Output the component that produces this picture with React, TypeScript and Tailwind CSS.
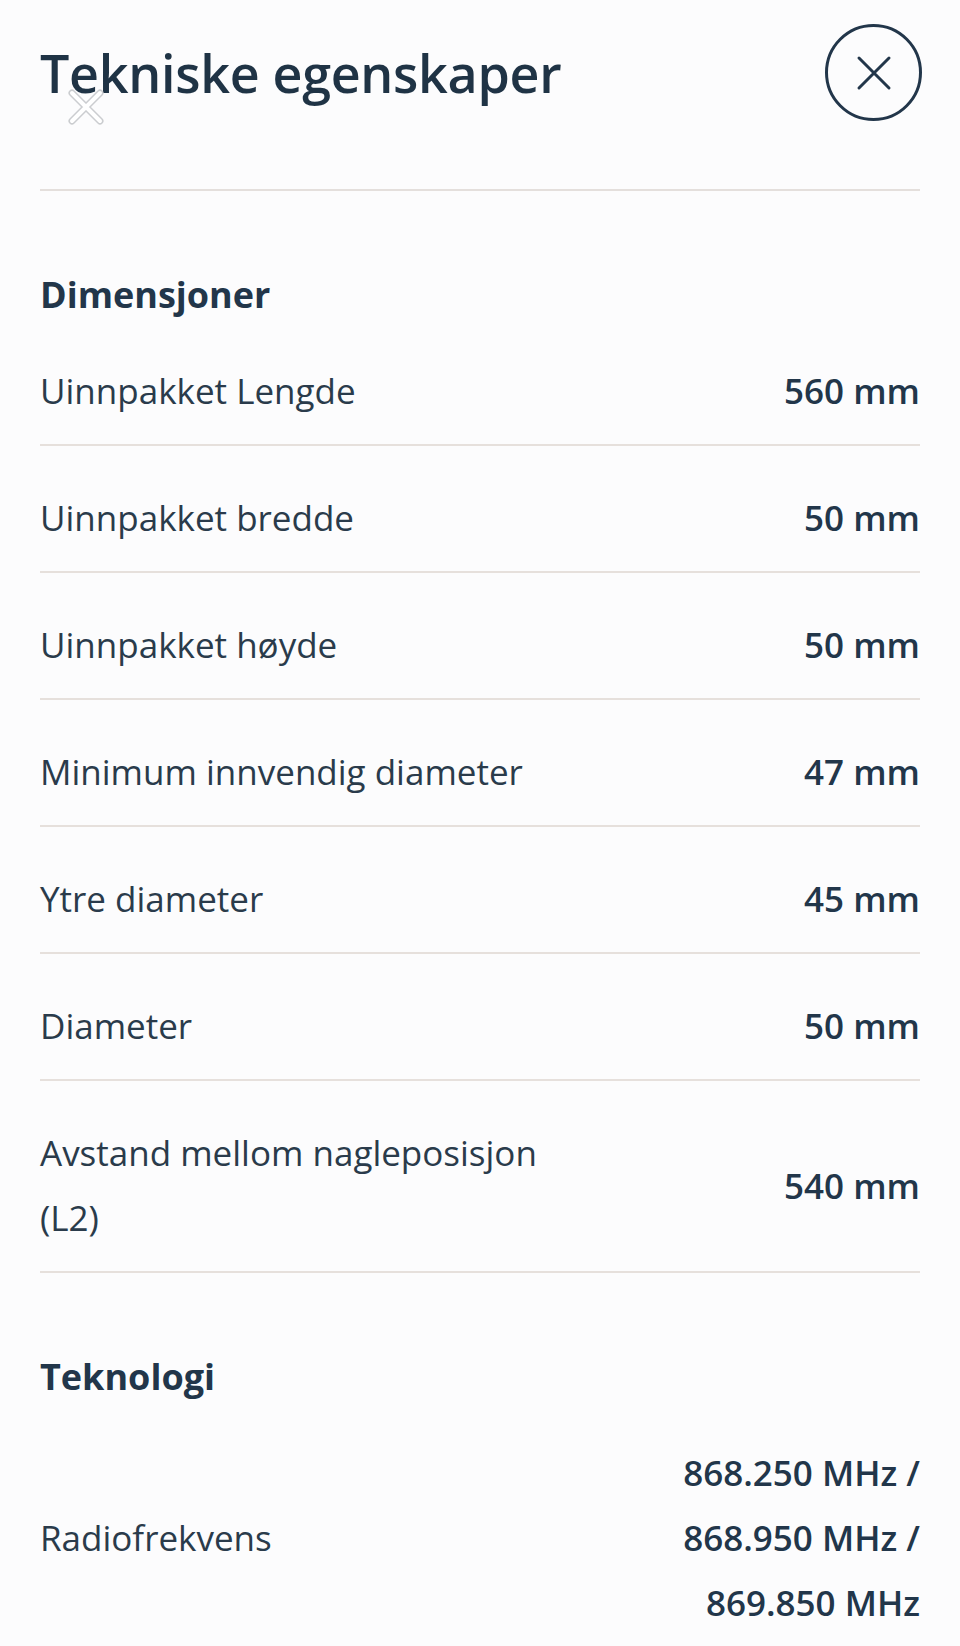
import React from 'react';

type Spec = { label: string[]; value: string[] };

const dimensions: Spec[] = [
    { label: ['Uinnpakket Lengde'], value: ['560 mm'] },
    { label: ['Uinnpakket bredde'], value: ['50 mm'] },
    { label: ['Uinnpakket høyde'], value: ['50 mm'] },
    { label: ['Minimum innvendig diameter'], value: ['47 mm'] },
    { label: ['Ytre diameter'], value: ['45 mm'] },
    { label: ['Diameter'], value: ['50 mm'] },
    { label: ['Avstand mellom nagleposisjon', '(L2)'], value: ['540 mm'] },
];

const technology: Spec[] = [
    { label: ['Radiofrekvens'], value: ['868.250 MHz /', '868.950 MHz /', '869.850 MHz'] },
];

const SpecRow: React.FC<{ spec: Spec; last?: boolean }> = ({ spec, last }) => (
    <div className={`flex items-center justify-between pt-[39px] pb-[21px] ${last ? '' : 'border-b-2 border-[#e6e0dc]'}`}>
        <div className="text-[35px] leading-[65px] text-[#2a3b4b]">
            {spec.label.map((l) => (
                <div key={l}>{l}</div>
            ))}
        </div>
        <div className="text-right text-[35px] leading-[65px] font-semibold text-[#22364a]">
            {spec.value.map((v) => (
                <div key={v}>{v}</div>
            ))}
        </div>
    </div>
);

const Section: React.FC<{ title: string; rows: Spec[]; open?: boolean }> = ({ title, rows, open }) => (
    <section className="mt-[80px]">
        <h2 className="text-[36px] leading-[48px] font-bold text-[#22364a]">{title}</h2>
        {rows.map((r, i) => (
            <SpecRow key={r.label[0]} spec={r} last={open && i === rows.length - 1} />
        ))}
    </section>
);

export default function App() {
    return (
        <div
            className="min-h-screen bg-[#fcfcfd] px-[40px] pt-[24px] overflow-hidden"
            style={{ fontFamily: '"Open Sans", "Noto Sans", sans-serif' }}
        >
            <header className="relative flex items-center justify-between">
                <h1 className="text-[52px] leading-[64px] font-semibold tracking-[-0.3px] text-[#1f3345]">
                    Tekniske egenskaper
                </h1>
                {/* stray overlay mark from the capture */}
                <svg className="absolute left-[26px] top-[64px]" width="40" height="38" viewBox="0 0 40 38">
                    <g strokeLinecap="round">
                        <path d="M6 5 L34 33 M34 5 L6 33" stroke="#cbcdd0" strokeWidth="7" />
                        <path d="M6 5 L34 33 M34 5 L6 33" stroke="#ffffff" strokeWidth="4" />
                    </g>
                </svg>
                <button className="w-[97px] h-[97px] rounded-full border-[3px] border-[#22364a] flex items-center justify-center mr-[-2px]">
                    <svg width="36" height="36" viewBox="0 0 36 36">
                        <path d="M3 3 L33 33 M33 3 L3 33" stroke="#22364a" strokeWidth="3" strokeLinecap="round" />
                    </svg>
                </button>
            </header>
            <div className="mt-[68px] h-[2px] bg-[#e4dfdc]" />

            <Section title="Dimensjoner" rows={dimensions} />
            <Section title="Teknologi" rows={technology} open />
        </div>
    );
}
